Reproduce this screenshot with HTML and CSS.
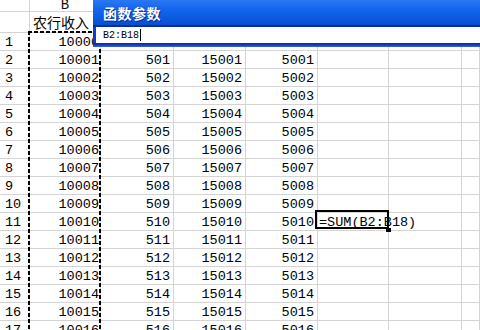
FILE: index.html
```html
<!DOCTYPE html>
<html lang="zh-CN">
<head>
<meta charset="utf-8">
<title>函数参数</title>
<link rel="stylesheet" href="styles.css">
</head>
<body>
<div class="sheet">
  <div class="grid">
    <div class="ch"></div><div class="ch">B</div><div class="ch"></div><div class="ch"></div><div class="ch"></div><div class="ch"></div><div class="ch"></div><div class="ch"></div>
    <div class="rh"></div><div class="c title">农行收入</div><div class="c"></div><div class="c"></div><div class="c"></div><div class="c"></div><div class="c"></div><div class="c"></div>
    <div class="rh">1</div><div class="c n b">10000</div><div class="c n">500</div><div class="c n">15000</div><div class="c n">5000</div><div class="c"></div><div class="c"></div><div class="c"></div>
    <div class="rh">2</div><div class="c n b">10001</div><div class="c n">501</div><div class="c n">15001</div><div class="c n">5001</div><div class="c"></div><div class="c"></div><div class="c"></div>
    <div class="rh">3</div><div class="c n b">10002</div><div class="c n">502</div><div class="c n">15002</div><div class="c n">5002</div><div class="c"></div><div class="c"></div><div class="c"></div>
    <div class="rh">4</div><div class="c n b">10003</div><div class="c n">503</div><div class="c n">15003</div><div class="c n">5003</div><div class="c"></div><div class="c"></div><div class="c"></div>
    <div class="rh">5</div><div class="c n b">10004</div><div class="c n">504</div><div class="c n">15004</div><div class="c n">5004</div><div class="c"></div><div class="c"></div><div class="c"></div>
    <div class="rh">6</div><div class="c n b">10005</div><div class="c n">505</div><div class="c n">15005</div><div class="c n">5005</div><div class="c"></div><div class="c"></div><div class="c"></div>
    <div class="rh">7</div><div class="c n b">10006</div><div class="c n">506</div><div class="c n">15006</div><div class="c n">5006</div><div class="c"></div><div class="c"></div><div class="c"></div>
    <div class="rh">8</div><div class="c n b">10007</div><div class="c n">507</div><div class="c n">15007</div><div class="c n">5007</div><div class="c"></div><div class="c"></div><div class="c"></div>
    <div class="rh">9</div><div class="c n b">10008</div><div class="c n">508</div><div class="c n">15008</div><div class="c n">5008</div><div class="c"></div><div class="c"></div><div class="c"></div>
    <div class="rh">10</div><div class="c n b">10009</div><div class="c n">509</div><div class="c n">15009</div><div class="c n">5009</div><div class="c"></div><div class="c"></div><div class="c"></div>
    <div class="rh">11</div><div class="c n b">10010</div><div class="c n">510</div><div class="c n">15010</div><div class="c n">5010</div><div class="c active">=SUM(B2:B18)</div><div class="c"></div><div class="c"></div>
    <div class="rh">12</div><div class="c n b">10011</div><div class="c n">511</div><div class="c n">15011</div><div class="c n">5011</div><div class="c"></div><div class="c"></div><div class="c"></div>
    <div class="rh">13</div><div class="c n b">10012</div><div class="c n">512</div><div class="c n">15012</div><div class="c n">5012</div><div class="c"></div><div class="c"></div><div class="c"></div>
    <div class="rh">14</div><div class="c n b">10013</div><div class="c n">513</div><div class="c n">15013</div><div class="c n">5013</div><div class="c"></div><div class="c"></div><div class="c"></div>
    <div class="rh">15</div><div class="c n b">10014</div><div class="c n">514</div><div class="c n">15014</div><div class="c n">5014</div><div class="c"></div><div class="c"></div><div class="c"></div>
    <div class="rh">16</div><div class="c n b">10015</div><div class="c n">515</div><div class="c n">15015</div><div class="c n">5015</div><div class="c"></div><div class="c"></div><div class="c"></div>
    <div class="rh">17</div><div class="c n b">10016</div><div class="c n">516</div><div class="c n">15016</div><div class="c n">5016</div><div class="c"></div><div class="c"></div><div class="c"></div>
  </div>
  <div class="marquee"></div>
  <div class="dialog">
    <div class="dlg-title">函数参数</div>
    <div class="dlg-field"><span class="dlg-text">B2:B18</span><span class="caret"></span></div>
    <div class="dlg-bottom"></div>
  </div>
</div>
</body>
</html>
```

FILE: styles.css
```css
* { box-sizing: border-box; }
html, body { margin: 0; padding: 0; background: #fff; }
.sheet {
  position: relative;
  width: 480px;
  height: 330px;
  overflow: hidden;
  background: #fff;
}
.grid {
  display: grid;
  grid-template-columns: 30px 71px 73px 72px 72px 71px 73px 1fr;
  grid-template-rows: 12px 21px;
  grid-auto-rows: 18px;
  font-family: "Liberation Mono", monospace;
  font-size: 13.5px;
  color: #000;
}
.ch, .rh, .c {
  border-right: 1px solid #d4d4d4;
  border-bottom: 1px solid #d4d4d4;
  white-space: nowrap;
}
.ch {
  display: flex;
  align-items: flex-end;
  justify-content: center;
  overflow: hidden;
  font-size: 14px;
  line-height: 12px;
  color: #111;
}
.rh {
  padding: 2px 0 0 5px;
  line-height: 16px;
}
.c {
  padding: 2px 3px 0 2px;
  line-height: 16px;
}
.n { text-align: right; }
.b { padding-right: 1px; }
.title {
  font-family: "Noto Sans CJK SC", sans-serif;
  font-size: 14px;
  line-height: 19px;
  padding: 1px 0 0 3px;
}
.active {
  position: relative;
  padding-left: 1px;
}
.active::after {
  content: "";
  position: absolute;
  left: -3px;
  top: -3px;
  right: -1px;
  bottom: 1px;
  border: 2px solid #000;
}
.active::before {
  content: "";
  position: absolute;
  left: 68px;
  top: 15px;
  width: 5px;
  height: 4px;
  background: #000;
  z-index: 1;
}
.marquee {
  position: absolute;
  left: 28px;
  top: 31px;
  width: 73px;
  height: 310px;
  background:
    repeating-linear-gradient(90deg, #000 0 4px, transparent 4px 6px) left top / 100% 2px no-repeat,
    repeating-linear-gradient(180deg, #000 0 4px, transparent 4px 6px) left top / 2px 100% no-repeat,
    repeating-linear-gradient(180deg, #000 0 4px, transparent 4px 6px) right top / 2px 100% no-repeat;
}
.dialog {
  position: absolute;
  left: 93px;
  top: 0;
  right: -10px;
  height: 47px;
  background: #0b3fcf;
  display: flex;
  flex-direction: column;
}
.dlg-title {
  height: 27px;
  border-bottom: 2px solid #0a2c9c;
  background: linear-gradient(180deg, #2a78f2 0%, #1466ee 35%, #0d5ae2 70%, #0a4ed2 100%);
  color: #fff;
  font-family: "Noto Sans CJK SC", sans-serif;
  font-weight: 700;
  font-size: 14px;
  line-height: 26px;
  padding-left: 10px;
  text-shadow: 1px 1px 0 #0a2a8a;
  letter-spacing: 0.5px;
}
.dlg-field {
  height: 16px;
  margin-left: 3px;
  background: #fff;
  display: flex;
  align-items: center;
  padding-left: 7px;
  font-family: "Liberation Mono", monospace;
  font-size: 10px;
  color: #000;
}
.caret {
  width: 1px;
  height: 12px;
  background: #000;
  margin-left: 1px;
}
.dlg-bottom {
  flex: 1;
  background: linear-gradient(180deg, #0a2a96 0%, #1a3cb8 50%, #3a62dc 100%);
}
```
